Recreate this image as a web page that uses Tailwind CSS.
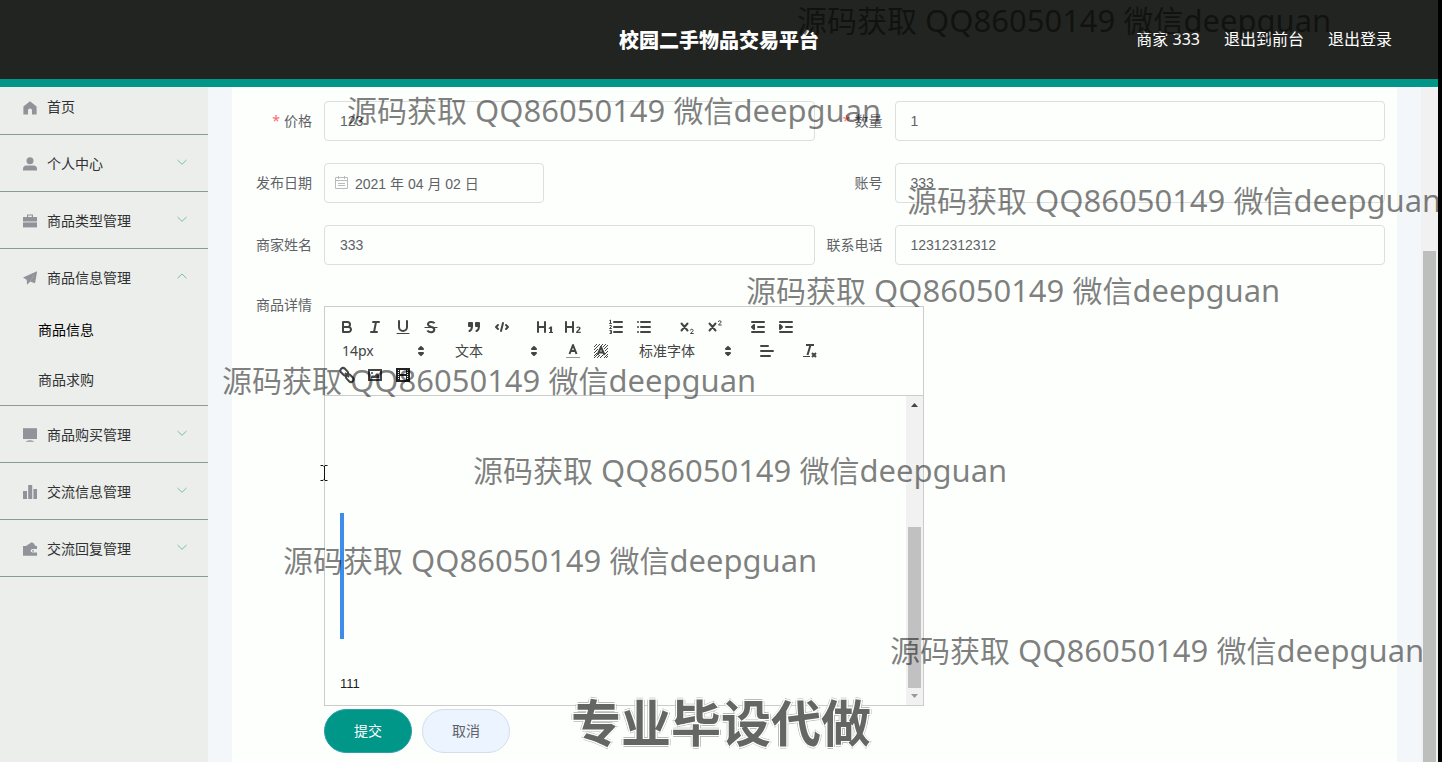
<!DOCTYPE html>
<html lang="zh-CN">
<head>
<meta charset="utf-8">
<meta name="viewport" content="width=device-width, initial-scale=1">
<title>校园二手物品交易平台</title>
<script src="https://cdn.jsdelivr.net/npm/@tailwindcss/browser@4"></script>
</head>
<body class="relative flex h-screen flex-col overflow-hidden border-r-4 border-black bg-[#f3f7f9] font-['Noto_Sans','Noto_Sans_CJK_SC',sans-serif] text-sm text-[#606266]">

<header class="grid shrink-0 grid-cols-[1fr_auto_1fr] items-center border-b-8 border-[#009688] bg-[#222421] text-white">
  <span></span>
  <h1 class="pt-[25px] pb-[23px] text-xl leading-[31px] font-black">校园二手物品交易平台</h1>
  <nav class="flex justify-end gap-6 pr-[46px] pb-0.5 text-base">
    <a href="#">商家 333</a>
    <a href="#">退出到前台</a>
    <a href="#">退出登录</a>
  </nav>
</header>

<div class="flex min-h-0 flex-1">
  <aside class="w-52 shrink-0 overflow-hidden bg-[#eceeeb] text-[#303133]">
    <ul class="-mt-[9px]">
      <li class="border-b border-[#8b9b96]">
        <a href="#" class="flex h-14 items-center gap-[10px] pt-0.5 pr-5 pl-[23px]">
          <svg class="mt-0.5 size-3.5 text-[#909399]" viewBox="0 0 14 14" fill="currentColor"><path d="M7 0.3L13.6 5.6V13.4H9V9.2Q9 7.6 7 7.6T5 9.2V13.4H.4V5.6Z"/></svg>
          <span>首页</span>
        </a>
      </li>
      <li class="border-b border-[#8b9b96]">
        <a href="#" class="flex h-14 items-center gap-[10px] pt-0.5 pr-5 pl-[23px]">
          <svg class="size-3.5 text-[#909399]" viewBox="0 0 14 14" fill="currentColor"><circle cx="7" cy="3.7" r="3.5"/><path d="M0 13.6V12Q0 8.4 3.6 8.4H10.4Q14 8.4 14 12V13.6Z"/></svg>
          <span class="flex-1">个人中心</span>
          <svg class="size-3 -mt-1 text-[#7dbcae]" viewBox="0 0 12 12" fill="none" stroke="currentColor"><path d="M1.5 4L6 8.3L10.5 4"/></svg>
        </a>
      </li>
      <li class="border-b border-[#8b9b96]">
        <a href="#" class="flex h-14 items-center gap-[10px] pt-0.5 pr-5 pl-[23px]">
          <svg class="size-3.5 text-[#909399]" viewBox="0 0 14 14" fill="currentColor"><path d="M4 3V.4H10V3H14V7.4H0V3ZM5.2 3H8.8V1.6H5.2Z" fill-rule="evenodd"/><path d="M0 8.4H14V13.4H0Z"/></svg>
          <span class="flex-1">商品类型管理</span>
          <svg class="size-3 -mt-1 text-[#7dbcae]" viewBox="0 0 12 12" fill="none" stroke="currentColor"><path d="M1.5 4L6 8.3L10.5 4"/></svg>
        </a>
      </li>
      <li class="border-b border-[#8b9b96]">
        <a href="#" class="flex h-14 items-center gap-[10px] pt-0.5 pr-5 pl-[23px]">
          <svg class="size-3.5 text-[#909399]" viewBox="0 0 14 14" fill="currentColor"><path d="M0 6.6L14.2 .2L12 12.2L7 10.4L11.4 3.6L4.8 9.6Z"/><path d="M3.8 9L11.6 3L7 10.8L4 13.8Z"/></svg>
          <span class="flex-1">商品信息管理</span>
          <svg class="size-3 -mt-1 text-[#7dbcae]" viewBox="0 0 12 12" fill="none" stroke="currentColor"><path d="M1.5 8.3L6 4L10.5 8.3"/></svg>
        </a>
        <ul>
          <li><a href="#" class="flex h-[50px] items-center pl-[38px] text-black">商品信息</a></li>
          <li><a href="#" class="flex h-[50px] items-center pl-[38px]">商品求购</a></li>
        </ul>
      </li>
      <li class="border-b border-[#8b9b96]">
        <a href="#" class="flex h-14 items-center gap-[10px] pt-0.5 pr-5 pl-[23px]">
          <svg class="size-3.5 text-[#909399]" viewBox="0 0 14 14" fill="currentColor"><path d="M0 .2H14V11H0Z"/><path d="M2.6 13.8Q3.4 12.2 7 12.2T11.4 13.8Z"/></svg>
          <span class="flex-1">商品购买管理</span>
          <svg class="size-3 -mt-1 text-[#7dbcae]" viewBox="0 0 12 12" fill="none" stroke="currentColor"><path d="M1.5 4L6 8.3L10.5 4"/></svg>
        </a>
      </li>
      <li class="border-b border-[#8b9b96]">
        <a href="#" class="flex h-14 items-center gap-[10px] pt-0.5 pr-5 pl-[23px]">
          <svg class="size-3.5 text-[#909399]" viewBox="0 0 14 14" fill="currentColor"><path d="M0 6H4V14H0ZM5.2 0H9.2V14H5.2ZM10.4 4H14V14H10.4Z"/></svg>
          <span class="flex-1">交流信息管理</span>
          <svg class="size-3 -mt-1 text-[#7dbcae]" viewBox="0 0 12 12" fill="none" stroke="currentColor"><path d="M1.5 4L6 8.3L10.5 4"/></svg>
        </a>
      </li>
      <li class="border-b border-[#8b9b96]">
        <a href="#" class="flex h-14 items-center gap-[10px] pt-0.5 pr-5 pl-[23px]">
          <svg class="size-3.5 text-[#909399]" viewBox="0 0 14 14" fill="currentColor"><path d="M0 4H14V7H9.6Q7.6 7 7.6 8.8T9.6 10.6H14V13.8H0Z"/><path d="M2.6 4.2L8.6 .2L10.6 1.2L12.6 4.2Z"/><circle cx="10" cy="8.8" r=".9"/></svg>
          <span class="flex-1">交流回复管理</span>
          <svg class="size-3 -mt-1 text-[#7dbcae]" viewBox="0 0 12 12" fill="none" stroke="currentColor"><path d="M1.5 4L6 8.3L10.5 4"/></svg>
        </a>
      </li>
    </ul>
  </aside>

  <main class="min-w-0 flex-1 overflow-hidden px-6">
    <form class="min-h-full bg-[#fdfffd] px-3 pt-[14px]">
      <div class="grid grid-cols-2 gap-y-[22px]">
        <div class="flex">
          <label for="price" class="w-20 shrink-0 pr-3 text-right leading-10"><span class="mr-1 text-[#f56c6c]">*</span>价格</label>
          <input id="price" value="123" class="h-10 min-w-0 flex-1 rounded border border-[#dcdfe0] px-[15px] font-['Liberation_Sans','Noto_Sans_CJK_SC',sans-serif]">
        </div>
        <div class="flex">
          <label for="count" class="w-20 shrink-0 pr-3 text-right leading-10"><span class="mr-1 text-[#f56c6c]">*</span>数量</label>
          <input id="count" value="1" class="h-10 min-w-0 flex-1 rounded border border-[#dcdfe0] px-[15px] font-['Liberation_Sans','Noto_Sans_CJK_SC',sans-serif]">
        </div>
        <div class="flex">
          <label for="date" class="w-20 shrink-0 pr-3 text-right leading-10">发布日期</label>
          <div class="relative w-[220px]">
            <svg class="absolute top-[13px] left-[11px] size-[13px] text-[#b8bbc0]" viewBox="0 0 13 13" fill="none" stroke="currentColor"><path d="M.5 1.5H12.5V12.5H.5ZM.5 4.5H12.5M3.5 0V3M9.5 0V3M3 7.5H10M3 9.5H10"/></svg>
            <input id="date" value="2021 年 04 月 02 日" class="h-10 w-full rounded border border-[#dcdfe0] pr-4 pl-[30px] font-['Liberation_Sans','Noto_Sans_CJK_SC',sans-serif]">
          </div>
        </div>
        <div class="flex">
          <label for="account" class="w-20 shrink-0 pr-3 text-right leading-10">账号</label>
          <input id="account" value="333" class="h-10 min-w-0 flex-1 rounded border border-[#dcdfe0] px-[15px] font-['Liberation_Sans','Noto_Sans_CJK_SC',sans-serif]">
        </div>
        <div class="flex">
          <label for="seller" class="w-20 shrink-0 pr-3 text-right leading-10">商家姓名</label>
          <input id="seller" value="333" class="h-10 min-w-0 flex-1 rounded border border-[#dcdfe0] px-[15px] font-['Liberation_Sans','Noto_Sans_CJK_SC',sans-serif]">
        </div>
        <div class="flex">
          <label for="phone" class="w-20 shrink-0 pr-3 text-right leading-10">联系电话</label>
          <input id="phone" value="12312312312" class="h-10 min-w-0 flex-1 rounded border border-[#dcdfe0] px-[15px] font-['Liberation_Sans','Noto_Sans_CJK_SC',sans-serif]">
        </div>
      </div>

      <div class="mt-5 flex">
        <span id="detail-label" class="w-20 shrink-0 pr-3 text-right leading-10">商品详情</span>
        <div class="mt-[21px] w-[600px] border border-[#ccc]">
          <div class="border-b border-[#ccc] p-2 text-[#444]">
            <div class="flex h-6 gap-[15px]">
              <div class="flex">
                <button type="button" aria-label="加粗" class="flex w-7 items-center justify-center"><svg class="size-[18px]" viewBox="0 0 18 18" fill="none" stroke="currentColor" stroke-width="2" stroke-linejoin="round"><path d="M5 4H9.5A2.5 2.5 0 0 1 12 6.5A2.5 2.5 0 0 1 9.5 9H5ZM5 9H10.5A2.5 2.5 0 0 1 13 11.500A2.5 2.5 0 0 1 10.500 14H5Z"/></svg></button>
                <button type="button" aria-label="斜体" class="flex w-7 items-center justify-center"><svg class="size-[18px]" viewBox="0 0 18 18" stroke="currentColor" stroke-width="2" stroke-linecap="round"><path d="M7 4H13M5 14H11M8 14L10 4"/></svg></button>
                <button type="button" aria-label="下划线" class="flex w-7 items-center justify-center"><svg class="size-[18px]" viewBox="0 0 18 18" fill="none" stroke="currentColor" stroke-width="2" stroke-linecap="round"><path d="M5 3V9A4 4 0 0 0 9 13A4 4 0 0 0 13 9V3"/><path stroke-width="1" d="M3 15.500H15"/></svg></button>
                <button type="button" aria-label="删除线" class="flex w-7 items-center justify-center"><svg class="size-[18px]" viewBox="0 0 18 18" fill="none" stroke="currentColor"><path d="M2.500 9.500H15.500"/><path stroke-width="2" d="M12.600 5.300C11.500 3.600 6 3.200 6 6.300C6 8.200 8 8.500 9.500 9C11.500 9.500 12.500 10.200 12.300 11.800C12 14.800 6.600 14.800 5.300 12.600"/></svg></button>
              </div>
              <div class="flex">
                <button type="button" aria-label="引用" class="flex w-7 items-center justify-center"><svg class="size-[18px]" viewBox="0 0 18 18" fill="currentColor" stroke="currentColor"><path d="M4 5H7V8H4ZM11 5H14V8H11Z" stroke-width="2" stroke-linejoin="round"/><path fill="none" stroke-width="2" stroke-linecap="round" d="M7 8C7 10.500 6.500 12 4.500 13M14 8C14 10.500 13.500 12 11.500 13"/></svg></button>
                <button type="button" aria-label="代码" class="flex w-7 items-center justify-center"><svg class="size-[18px]" viewBox="0 0 18 18" fill="none" stroke="currentColor" stroke-width="2" stroke-linecap="round" stroke-linejoin="round"><path d="M5 7L3 9L5 11M13 7L15 9L13 11M10 5L8 13" /></svg></button>
              </div>
              <div class="flex">
                <button type="button" aria-label="一级标题" class="flex w-7 items-center justify-center"><svg class="size-[18px]" viewBox="0 0 18 18" fill="currentColor"><path d="M10 4V14A1 1 0 0 1 8 14V10H3V14A1 1 0 0 1 1 14V4A1 1 0 0 1 3 4V8H8V4A1 1 0 0 1 10 4ZM16.068 13.990H17V15H13V13.990H14.067V10.600L13.100 11L12.400 10.200L14.500 8.400H16.068Z"/></svg></button>
                <button type="button" aria-label="二级标题" class="flex w-7 items-center justify-center"><svg class="size-[18px]" viewBox="0 0 18 18" fill="currentColor"><path d="M16.740 13.810V15H12.100V14.200C12.100 12.500 15 11.500 15 10.400C15 9.500 13.800 9.300 13 10.200L12.100 9.400C13.600 7.700 16.600 8.300 16.600 10.300C16.600 11.900 14.300 12.700 14 13.810ZM9 3A1 1 0 0 0 8 4V8H3V4A1 1 0 0 0 1 4V14A1 1 0 0 0 3 14V10H8V14A1 1 0 0 0 10 14V4A1 1 0 0 0 9 3Z"/></svg></button>
              </div>
              <div class="flex">
                <button type="button" aria-label="有序列表" class="flex w-7 items-center justify-center"><svg class="size-[18px]" viewBox="0 0 18 18" fill="none" stroke="currentColor"><path stroke-width="2" stroke-linecap="round" d="M7 4H15M7 9H15M7 14H15"/><path d="M2.500 2.500L3.500 2V5.500M2.200 5.500H4.800M2.500 7.500H4.300V8.800L2.500 10.500H4.800M2.500 12.500H4.500V14H3.200H4.500V15.500H2.500"/></svg></button>
                <button type="button" aria-label="无序列表" class="flex w-7 items-center justify-center"><svg class="size-[18px]" viewBox="0 0 18 18" stroke="currentColor" stroke-width="2" stroke-linecap="round"><path d="M6 4H15M6 9H15M6 14H15M3 4H3M3 9H3M3 14H3"/></svg></button>
              </div>
              <div class="flex">
                <button type="button" aria-label="下标" class="flex w-7 items-center justify-center"><svg class="size-[18px]" viewBox="0 0 18 18" fill="none" stroke="currentColor"><path stroke-width="2" stroke-linecap="round" d="M3.500 5.500L9.500 12.500M9.500 5.500L3.500 12.500"/><path d="M12.300 12.500C12.300 10.800 15.200 10.800 15.200 12.500C15.200 13.500 12.700 14.600 12.500 15.500H15.700"/></svg></button>
                <button type="button" aria-label="上标" class="flex w-7 items-center justify-center"><svg class="size-[18px]" viewBox="0 0 18 18" fill="none" stroke="currentColor"><path stroke-width="2" stroke-linecap="round" d="M3.500 5.500L9.500 12.500M9.500 5.500L3.500 12.500"/><path d="M12.300 4C12.300 2.300 15.200 2.300 15.200 4C15.200 5 12.700 6.100 12.500 7H15.700"/></svg></button>
              </div>
              <div class="flex">
                <button type="button" aria-label="减少缩进" class="flex w-7 items-center justify-center"><svg class="size-[18px]" viewBox="0 0 18 18" fill="currentColor" stroke="currentColor" stroke-width="2" stroke-linecap="round" stroke-linejoin="round"><path d="M3 14H15M3 4H15M9 9H15"/><path d="M5 7V11L3 9Z"/></svg></button>
                <button type="button" aria-label="增加缩进" class="flex w-7 items-center justify-center"><svg class="size-[18px]" viewBox="0 0 18 18" fill="currentColor" stroke="currentColor" stroke-width="2" stroke-linecap="round" stroke-linejoin="round"><path d="M3 14H15M3 4H15M9 9H15"/><path d="M3 7V11L5 9Z"/></svg></button>
              </div>
            </div>
            <div class="flex h-6 gap-[15px]">
              <div class="relative w-[98px]">
                <select aria-label="字号" class="h-6 w-full appearance-none pl-[9px]"><option>14px</option></select>
                <svg class="pointer-events-none absolute top-[3px] right-px size-[18px]" viewBox="0 0 18 18" fill="currentColor" stroke="currentColor" stroke-width="2" stroke-linejoin="round"><path d="M7 7L9 5L11 7ZM7 11L9 13L11 11Z"/></svg>
              </div>
              <div class="relative w-[98px]">
                <select aria-label="段落" class="h-6 w-full appearance-none pl-[9px]"><option>文本</option></select>
                <svg class="pointer-events-none absolute top-[3px] right-px size-[18px]" viewBox="0 0 18 18" fill="currentColor" stroke="currentColor" stroke-width="2" stroke-linejoin="round"><path d="M7 7L9 5L11 7ZM7 11L9 13L11 11Z"/></svg>
              </div>
              <div class="flex">
                <button type="button" aria-label="文字颜色" class="flex w-7 items-center justify-center"><svg class="size-[18px]" viewBox="0 0 18 18" fill="none" stroke="currentColor"><path stroke="#999" d="M2 15.500H16"/><path stroke-width="2" stroke-linejoin="round" d="M5.500 12L9 3L12.500 12M7 9H11"/></svg></button>
                <button type="button" aria-label="背景颜色" class="flex w-7 items-center justify-center"><svg class="size-[18px]" viewBox="0 0 18 18" fill="none" stroke="currentColor"><path d="M2 5L5 2M2 8L8 2M2 11L6 7M8 5L11 2M2 14L5 11M11 5L14 2M2 16L5 13M12 7L16 3M13 9L16 6M5 16L8 13M13 12L16 9M8 16L11 13M12 16L16 12M14 16L16 14"/><path stroke-width="2" stroke-linejoin="round" d="M5.500 13L9 5L12.500 13M7 10.500H11"/></svg></button>
              </div>
              <div class="relative w-[108px]">
                <select aria-label="字体" class="h-6 w-full appearance-none pl-[9px]"><option>标准字体</option></select>
                <svg class="pointer-events-none absolute top-[3px] right-px size-[18px]" viewBox="0 0 18 18" fill="currentColor" stroke="currentColor" stroke-width="2" stroke-linejoin="round"><path d="M7 7L9 5L11 7ZM7 11L9 13L11 11Z"/></svg>
              </div>
              <button type="button" aria-label="对齐" class="flex w-7 items-center justify-center"><svg class="size-[18px]" viewBox="0 0 18 18" stroke="currentColor" stroke-width="2" stroke-linecap="round"><path d="M3 4H10M3 9H15M3 14H12"/></svg></button>
              <button type="button" aria-label="清除格式" class="flex w-7 items-center justify-center"><svg class="size-[18px]" viewBox="0 0 18 18" fill="none" stroke="currentColor" stroke-width="2"><path d="M5 3H13M6.500 13L9.500 3M11 11L15 15M15 11L11 15"/><path stroke-width="1" d="M2 14.500H9"/></svg></button>
            </div>
            <div class="flex h-6">
              <button type="button" aria-label="链接" class="flex w-7 items-center justify-center"><svg class="size-[18px]" viewBox="0 0 18 18" fill="none" stroke="currentColor" stroke-width="2"><rect x="2" y="3.200" width="8.400" height="5.200" rx="2.600" transform="rotate(45 6.200 5.800)"/><rect x="7.600" y="9.600" width="8.400" height="5.200" rx="2.600" transform="rotate(45 11.800 12.200)"/><path d="M7 7L11 11"/></svg></button>
              <button type="button" aria-label="图片" class="flex w-7 items-center justify-center"><svg class="size-[18px]" viewBox="0 0 18 18"><path fill="none" stroke="currentColor" stroke-width="2" d="M3 4H15V14H3Z"/><path fill="currentColor" d="M5 12V11L7 9L8 10L11 7L13 9V12Z"/><circle cx="6" cy="7" r="1" fill="currentColor"/></svg></button>
              <button type="button" aria-label="视频" class="flex w-7 items-center justify-center"><svg class="size-[18px]" viewBox="0 0 18 18"><path fill="none" stroke="#222" stroke-width="2" d="M3 3H15V15H3ZM5 9H13"/><path fill="none" stroke="#222" stroke-width="2" stroke-dasharray="1 1" d="M4.500 3V15M13.500 3V15"/><path fill="none" stroke="#222" d="M5.500 3V15M12.500 3V15"/></svg></button>
            </div>
          </div>
          <div class="flex h-[309px]">
            <div role="textbox" contenteditable="true" aria-labelledby="detail-label" class="flex-1 px-[15px] pt-[117px] font-['Liberation_Sans',sans-serif] text-[13px] text-black/90 outline-none">
              <blockquote class="h-[126px] border-l-4 border-[#3c8ee8]"></blockquote>
              <p class="mt-[35px] leading-5">111</p>
            </div>
            <div class="flex w-[17px] flex-col items-center bg-[#f1f1f1]">
              <svg class="h-[17px] w-[9px]" viewBox="0 0 9 17" fill="#444"><path d="M1 11L4.500 7L8 11Z"/></svg>
              <div class="mt-[114px] w-[13px] flex-1 bg-[#c1c1c1]"></div>
              <svg class="h-[17px] w-[9px]" viewBox="0 0 9 17" fill="#999"><path d="M1 6L4.500 10L8 6Z"/></svg>
            </div>
          </div>
        </div>
      </div>

      <div class="mt-[3px] ml-20 flex gap-[10px]">
        <button type="submit" class="h-11 w-[88px] rounded-[22px] border border-[#2b9fae] bg-[#009688] text-white">提交</button>
        <button type="button" class="h-11 w-[88px] rounded-[22px] border border-[#d5dde8] bg-[#ebf4ff]">取消</button>
      </div>
    </form>
  </main>

  <div class="flex w-[17px] shrink-0 flex-col items-center bg-[#f1f1f1] pt-[164px]">
    <div class="w-[13px] flex-1 bg-[#bdbfbd]"></div>
  </div>
</div>

<!-- Watermarks and caption lie over the whole page -->
<div class="pointer-events-none absolute inset-0 overflow-hidden text-[30px] leading-10 whitespace-nowrap text-black/50">
  <p class="absolute top-0 left-[797px]">源码获取<span class="text-[31px]"> QQ86050149 </span>微信<span class="text-[31px]">deepguan</span></p>
  <p class="absolute top-[90px] left-[347px]">源码获取<span class="text-[31px]"> QQ86050149 </span>微信<span class="text-[31px]">deepguan</span></p>
  <p class="absolute top-[180px] left-[907px]">源码获取<span class="text-[31px]"> QQ86050149 </span>微信<span class="text-[31px]">deepguan</span></p>
  <p class="absolute top-[270px] left-[746px]">源码获取<span class="text-[31px]"> QQ86050149 </span>微信<span class="text-[31px]">deepguan</span></p>
  <p class="absolute top-[360px] left-[222px]">源码获取<span class="text-[31px]"> QQ86050149 </span>微信<span class="text-[31px]">deepguan</span></p>
  <p class="absolute top-[450px] left-[473px]">源码获取<span class="text-[31px]"> QQ86050149 </span>微信<span class="text-[31px]">deepguan</span></p>
  <p class="absolute top-[540px] left-[283px]">源码获取<span class="text-[31px]"> QQ86050149 </span>微信<span class="text-[31px]">deepguan</span></p>
  <p class="absolute top-[630px] left-[890px]">源码获取<span class="text-[31px]"> QQ86050149 </span>微信<span class="text-[31px]">deepguan</span></p>
</div>
<p class="pointer-events-none absolute inset-x-0 bottom-3 pl-1 text-center font-['Noto_Sans_CJK_SC',sans-serif] text-[50px] leading-[60px] font-bold text-[#646664] [text-shadow:1px_0_#fff,-1px_0_#fff,0_1px_#fff,0_-1px_#fff,1px_1px_#fff,-1px_-1px_#fff,1px_-1px_#fff,-1px_1px_#fff,2px_0_#bbb,-2px_0_#bbb,0_2px_#bbb,0_-2px_#bbb]">专业毕设代做</p>
<svg class="pointer-events-none absolute top-[465px] left-[320px] h-4 w-2" viewBox="0 0 8 16" fill="none" stroke="#111"><path d="M.500 .500H3L4 1.500L5 .500H7.500M4.500 1V15M.500 15.500H3L4 14.500L5 15.500H7.500"/></svg>
</body>
</html>
